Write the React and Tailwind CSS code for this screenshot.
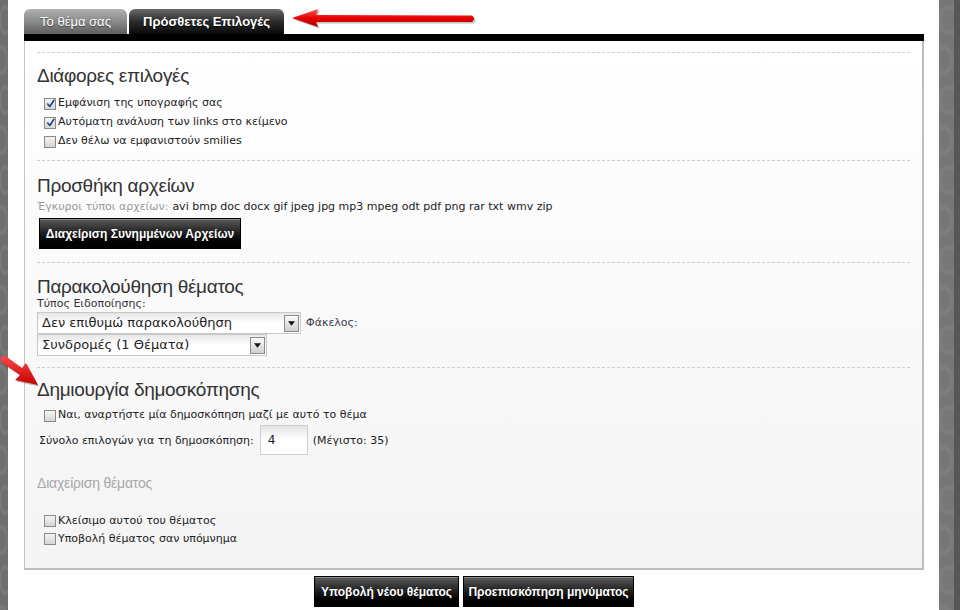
import React from "react";

const small = { fontFamily: '"DejaVu Sans", Verdana, sans-serif' };
const head = { fontFamily: '"Liberation Sans", Arial, sans-serif' };

function Check({ checked }) {
  return (
    <span className="relative inline-block w-[12px] h-[12px] border border-[#8a8a8a] bg-gradient-to-b from-[#f4f4f4] to-[#d6d6d6] shrink-0">
      {checked && (
        <svg viewBox="0 0 12 12" className="absolute left-[1px] top-[0px] w-[10px] h-[10px]">
          <path d="M2 6 L4.6 9 L9.5 1.5" fill="none" stroke="#1d3f8f" strokeWidth="1.9" strokeLinecap="round" strokeLinejoin="round" />
        </svg>
      )}
    </span>
  );
}

function CheckRow({ checked, children, h = "h-[19px]" }) {
  return (
    <div className={`flex items-center ${h} pl-[7px] text-[11px] text-[#222]`} style={small}>
      <Check checked={checked} />
      <span className="ml-[2px]">{children}</span>
    </div>
  );
}

function Heading({ children, className = "" }) {
  return (
    <div className={`text-[19px] leading-[22px] text-[#333] tracking-[-0.3px] ${className}`} style={head}>
      {children}
    </div>
  );
}

function Dashed({ className = "" }) {
  return <div className={`border-t border-dashed border-[#cfcfcf] ${className}`} />;
}

function Select({ w, children }) {
  return (
    <div className={`${w} h-[22px] flex items-center border border-[#c9c9c9] bg-gradient-to-b from-[#e6e6e6] via-white to-white pl-[4px] pr-[1px]`}>
      <span className="flex-1 text-[13px] text-[#222] whitespace-nowrap" style={small}>{children}</span>
      <span className="w-[15px] h-[17px] border border-[#8c8c8c] bg-gradient-to-b from-[#fafafa] to-[#cfcfcf] flex items-center justify-center">
        <svg viewBox="0 0 8 5" className="w-[7px] h-[5px]"><path d="M0 0 H8 L4 5 Z" fill="#111" /></svg>
      </span>
    </div>
  );
}

function BlackButton({ w, children }) {
  return (
    <div
      className={`${w} h-[31px] flex items-center justify-center border border-black bg-gradient-to-b from-[#5c5c5c] via-[#1e1e1e] to-[#000] text-white text-[12px] font-bold shadow-[inset_0_1px_0_#8a8a8a] [text-shadow:0_1px_1px_#000] whitespace-nowrap`}
      style={head}
    >
      {children}
    </div>
  );
}

function Pattern() {
  const items = [];
  for (let i = 0; i < 16; i++) {
    items.push(<circle key={"c" + i} cx={i % 2 ? 4 : 14} cy={20 + i * 40} r="13" fill="none" stroke="#888" strokeWidth="5" />);
  }
  return (
    <svg className="absolute inset-0 w-full h-full" preserveAspectRatio="none" viewBox="0 0 20 610">
      {items}
    </svg>
  );
}

function Strip({ className }) {
  return (
    <div className={`h-full relative overflow-hidden ${className}`}>
      <div className="absolute inset-0 opacity-40"><Pattern /></div>
    </div>
  );
}

export default function App() {
  return (
    <div className="w-[960px] h-[610px] flex bg-white overflow-hidden relative">
      <Strip className="w-[8px] bg-[#6f6f6f]" />
      <div className="flex-1 pl-[16px] pr-[15px] flex flex-col">
        {/* Tabs */}
        <div className="flex items-end gap-[2px] pt-[9px] h-[34px]">
          <div className="w-[103px] h-[25px] rounded-t-[6px] bg-gradient-to-b from-[#b0b0b0] via-[#8a8a8a] to-[#5e5e5e] flex items-center justify-center text-white text-[13px] [text-shadow:0_1px_1px_#444]" style={head}>
            Το θέμα σας
          </div>
          <div className="w-[155px] h-[25px] rounded-t-[6px] bg-gradient-to-b from-[#6a6a6a] via-[#2c2c2c] to-[#0a0a0a] flex items-center justify-center text-white text-[13px] font-bold [text-shadow:0_1px_1px_#000]" style={head}>
            Πρόσθετες Επιλογές
          </div>
        </div>
        <div className="h-[7px] bg-black" />
        {/* Panel */}
        <div className="h-[529px] border-l border-l-[#c4c4c4] border-r-2 border-r-[#bdbdbd] border-b-2 border-b-[#bdbdbd] bg-gradient-to-b from-white to-[#f4f4f4] px-[12px] flex flex-col">
          <Dashed className="mt-[11px]" />
          <Heading className="mt-[12px]">Διάφορες επιλογές</Heading>
          <div className="mt-[7px]">
            <CheckRow checked>Εμφάνιση της υπογραφής σας</CheckRow>
            <CheckRow checked>Αυτόματη ανάλυση των links στο κείμενο</CheckRow>
            <CheckRow>Δεν θέλω να εμφανιστούν smilies</CheckRow>
          </div>
          <Dashed className="mt-[9px]" />
          <Heading className="mt-[14px]">Προσθήκη αρχείων</Heading>
          <div className="mt-[2px] h-[16px] flex items-center text-[11px]" style={small}>
            <span className="text-[#999]">Έγκυροι τύποι αρχείων:</span>
            <span className="ml-[4px] text-[#222]">avi bmp doc docx gif jpeg jpg mp3 mpeg odt pdf png rar txt wmv zip</span>
          </div>
          <div className="mt-[3px] ml-[2px]">
            <BlackButton w="w-[202px]">Διαχείριση Συνημμένων Αρχείων</BlackButton>
          </div>
          <Dashed className="mt-[13px]" />
          <Heading className="mt-[13px]">Παρακολούθηση θέματος</Heading>
          <div className="h-[12px] flex items-center text-[11px] text-[#333]" style={small}>Τύπος Ειδοποίησης:</div>
          <div className="mt-[2px] flex items-center">
            <Select w="w-[264px]">Δεν επιθυμώ παρακολούθηση</Select>
            <span className="ml-[5px] text-[11px] text-[#3a3a4a]" style={small}>Φάκελος:</span>
          </div>
          <Select w="w-[230px]">Συνδρομές (1 Θέματα)</Select>
          <Dashed className="mt-[11px]" />
          <Heading className="mt-[11px]">Δημιουργία δημοσκόπησης</Heading>
          <div className="mt-[5px]">
            <CheckRow>Ναι, αναρτήστε μία δημοσκόπηση μαζί με αυτό το θέμα</CheckRow>
          </div>
          <div className="flex items-center pl-[2px] text-[11px] text-[#222]" style={small}>
            <span className="mt-[2px]">Σύνολο επιλογών για τη δημοσκόπηση:</span>
            <div className="ml-[6px] w-[48px] h-[30px] border border-[#cfcfcf] bg-gradient-to-b from-[#e4e4e4] via-white to-white flex items-center pl-[7px] text-[12px]">4</div>
            <span className="ml-[5px] mt-[2px]">(Μέγιστο: 35)</span>
          </div>
          <div className="mt-[18px] h-[20px] flex items-center text-[14px] text-[#a8a8a8] tracking-[-0.2px]" style={head}>Διαχείριση θέματος</div>
          <div className="mt-[19px]">
            <CheckRow h="h-[18px]">Κλείσιμο αυτού του θέματος</CheckRow>
            <CheckRow h="h-[18px]">Υποβολή θέματος σαν υπόμνημα</CheckRow>
          </div>
        </div>
        {/* Bottom buttons */}
        <div className="mt-[6px] flex justify-center gap-[4px]">
          <BlackButton w="w-[145px]">Υποβολή νέου θέματος</BlackButton>
          <BlackButton w="w-[171px]">Προεπισκόπηση μηνύματος</BlackButton>
        </div>
      </div>
      <div className="w-[21px] h-full flex">
        <Strip className="w-[15px] bg-[#777777]" />
        <div className="w-[6px] h-full bg-[#575757]" />
      </div>

      {/* Top red arrow */}
      <svg className="absolute left-[288px] top-[6px] w-[194px] h-[26px]" viewBox="0 0 194 26">
        <defs>
          <linearGradient id="ra" x1="0" y1="0" x2="0" y2="1">
            <stop offset="0" stopColor="#ff5a5a" />
            <stop offset="0.5" stopColor="#e80000" />
            <stop offset="1" stopColor="#b00000" />
          </linearGradient>
        </defs>
        <g transform="translate(1.5,1.5)" fill="#000" opacity="0.25">
          <path d="M4 12 L30 3 L28 9 L184 9.5 Q188 12.5 184 16 L28 16 L30 21 Z" />
        </g>
        <path d="M4 12 L30 3 L28 9 L184 9.5 Q188 12.5 184 16 L28 16 L30 21 Z" fill="url(#ra)" />
      </svg>

      {/* Left red arrow */}
      <svg className="absolute left-[0px] top-[352px] w-[42px] h-[38px]" viewBox="0 0 42 38">
        <defs>
          <linearGradient id="rb" x1="0" y1="0" x2="0" y2="1">
            <stop offset="0" stopColor="#ff4a4a" />
            <stop offset="1" stopColor="#c00000" />
          </linearGradient>
        </defs>
        <g transform="translate(1,1.5)" opacity="0.25">
          <path d="M1 6 Q3 2 7 5 L22 16 L26 11 L38 33 L15 28 L20 23 L4 12 Q0 9 1 6 Z" fill="#000" />
        </g>
        <path d="M1 6 Q3 2 7 5 L22 16 L26 11 L38 33 L15 28 L20 23 L4 12 Q0 9 1 6 Z" fill="url(#rb)" />
      </svg>
    </div>
  );
}
